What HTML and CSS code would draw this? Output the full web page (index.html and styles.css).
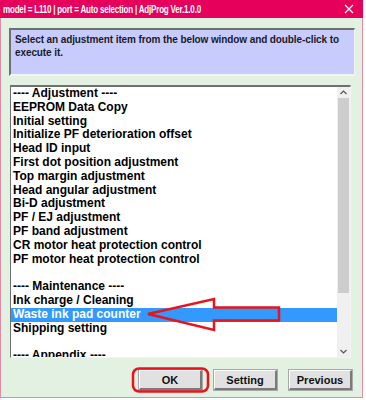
FILE: index.html
```html
<!DOCTYPE html>
<html>
<head>
<meta charset="utf-8">
<link rel="stylesheet" href="styles.css">
</head>
<body>
<div class="window">
  <div class="titlebar">
    <span class="title">model = L110 | port = Auto selection | AdjProg Ver.1.0.0</span>
    <svg class="close" width="10" height="10" viewBox="0 0 10 10"><path d="M1 1 L9 9 M9 1 L1 9" stroke="#fff" stroke-width="1.2" fill="none"/></svg>
  </div>
  <div class="content">
    <div class="hint">Select an adjustment item from the below window and double-click to execute it.</div>
    <div class="list">
      <div class="items">
        <div class="item">---- Adjustment ----</div>
        <div class="item">EEPROM Data Copy</div>
        <div class="item">Initial setting</div>
        <div class="item">Initialize PF deterioration offset</div>
        <div class="item">Head ID input</div>
        <div class="item">First dot position adjustment</div>
        <div class="item">Top margin adjustment</div>
        <div class="item">Head angular adjustment</div>
        <div class="item">Bi-D adjustment</div>
        <div class="item">PF / EJ adjustment</div>
        <div class="item">PF band adjustment</div>
        <div class="item">CR motor heat protection control</div>
        <div class="item">PF motor heat protection control</div>
        <div class="item">&nbsp;</div>
        <div class="item">---- Maintenance ----</div>
        <div class="item">Ink charge / Cleaning</div>
        <div class="item selected">Waste ink pad counter</div>
        <div class="item">Shipping setting</div>
        <div class="item">&nbsp;</div>
        <div class="item">---- Appendix ----</div>
      </div>
      <div class="scrollbar">
        <div class="sb-btn"><svg width="7" height="5" viewBox="0 0 7 5"><polyline points="0.5,4 3.5,1 6.5,4" fill="none" stroke="#555" stroke-width="1.2"/></svg></div>
        <div class="sb-thumb"></div>
        <div class="sb-track"></div>
        <div class="sb-btn"><svg width="7" height="5" viewBox="0 0 7 5"><polyline points="0.5,1 3.5,4 6.5,1" fill="none" stroke="#555" stroke-width="1.2"/></svg></div>
      </div>
    </div>
    <div class="buttons">
      <button class="btn">OK</button>
      <button class="btn">Setting</button>
      <button class="btn">Previous</button>
    </div>
  </div>
  <svg class="annot" width="366" height="400" viewBox="0 0 366 400">
    <polygon points="148,314 214,299 214,307.5 279,307.5 279,320.5 214,320.5 214,330" fill="none" stroke="#e8141c" stroke-width="2.5" stroke-linejoin="miter"/>
    <rect x="133" y="368.5" width="75" height="23" rx="6" ry="6" fill="none" stroke="#e8141c" stroke-width="2.5"/>
  </svg>
</div>
</body>
</html>
```

FILE: styles.css
```css
html, body {
  margin: 0;
  padding: 0;
  background: #ffffff;
}

.window {
  position: relative;
  width: 361px;
  height: 397px;
  background: #e3f1e3;
  border-left: 1px solid #e88aa6;
  border-right: 1px solid #e88aa6;
  border-bottom: 1px solid #e88aa6;
  font-family: "Liberation Sans", Arial, sans-serif;
}

.titlebar {
  height: 18px;
  margin: 0 -1px;
  background: #e6005c;
  display: flex;
  align-items: center;
  justify-content: space-between;
  padding: 0 9px 0 3px;
  color: #ffffff;
}

.title {
  display: inline-block;
  font-size: 11.5px;
  font-weight: bold;
  letter-spacing: -0.3px;
  white-space: nowrap;
  transform: scaleX(0.7);
  transform-origin: left center;
}

.close {
  display: block;
}

.content {
  display: flex;
  flex-direction: column;
}

.hint {
  margin: 10px 0 0 8px;
  width: 336px;
  height: 39px;
  padding: 4px 3px 1px 4px;
  background: #c8ccfc;
  border-top: 2px solid #6f6f6f;
  border-left: 2px solid #6f6f6f;
  border-right: 1px solid #f4f4f4;
  border-bottom: 2px solid #f4f4f4;
  font-size: 10px;
  font-weight: bold;
  letter-spacing: -0.1px;
  line-height: 12.5px;
  color: #1a1a2a;
}

.list {
  margin: 9px 0 0 9px;
  width: 339px;
  height: 270px;
  background: #ffffff;
  border-top: 2px solid #6f6f6f;
  border-left: 1px solid #6f6f6f;
  border-right: 1px solid #f4f4f4;
  border-bottom: 1px solid #f4f4f4;
  display: flex;
  overflow: hidden;
}

.items {
  flex: 1;
  overflow: hidden;
}

.item {
  height: 13.8px;
  line-height: 13.8px;
  padding-left: 2px;
  font-size: 12px;
  font-weight: bold;
  color: #000000;
  white-space: nowrap;
}

.item.selected {
  background: #3399ff;
  color: #ffffff;
}

.scrollbar {
  width: 13px;
  background: #f0f0f0;
  display: flex;
  flex-direction: column;
}

.sb-btn {
  height: 11px;
  display: flex;
  align-items: center;
  justify-content: center;
}

.sb-thumb {
  margin: 0 1px;
  height: 195px;
  background: #cdcdcd;
}

.sb-track {
  flex: 1;
}

.buttons {
  margin-top: 12px;
  display: flex;
  justify-content: flex-end;
  gap: 12px;
  padding-right: 10px;
}

.btn {
  width: 63px;
  height: 20px;
  padding: 0;
  margin: 0;
  background: #e1e1e1;
  border-top: 1px solid #ffffff;
  border-left: 1px solid #ffffff;
  border-right: 2px solid #7a7a7a;
  border-bottom: 2px solid #7a7a7a;
  outline: 1px solid #a8a8a8;
  font-family: "Liberation Sans", Arial, sans-serif;
  font-size: 11px;
  font-weight: bold;
  color: #111111;
}

.annot {
  position: absolute;
  left: -1px;
  top: 0;
  pointer-events: none;
}
```
